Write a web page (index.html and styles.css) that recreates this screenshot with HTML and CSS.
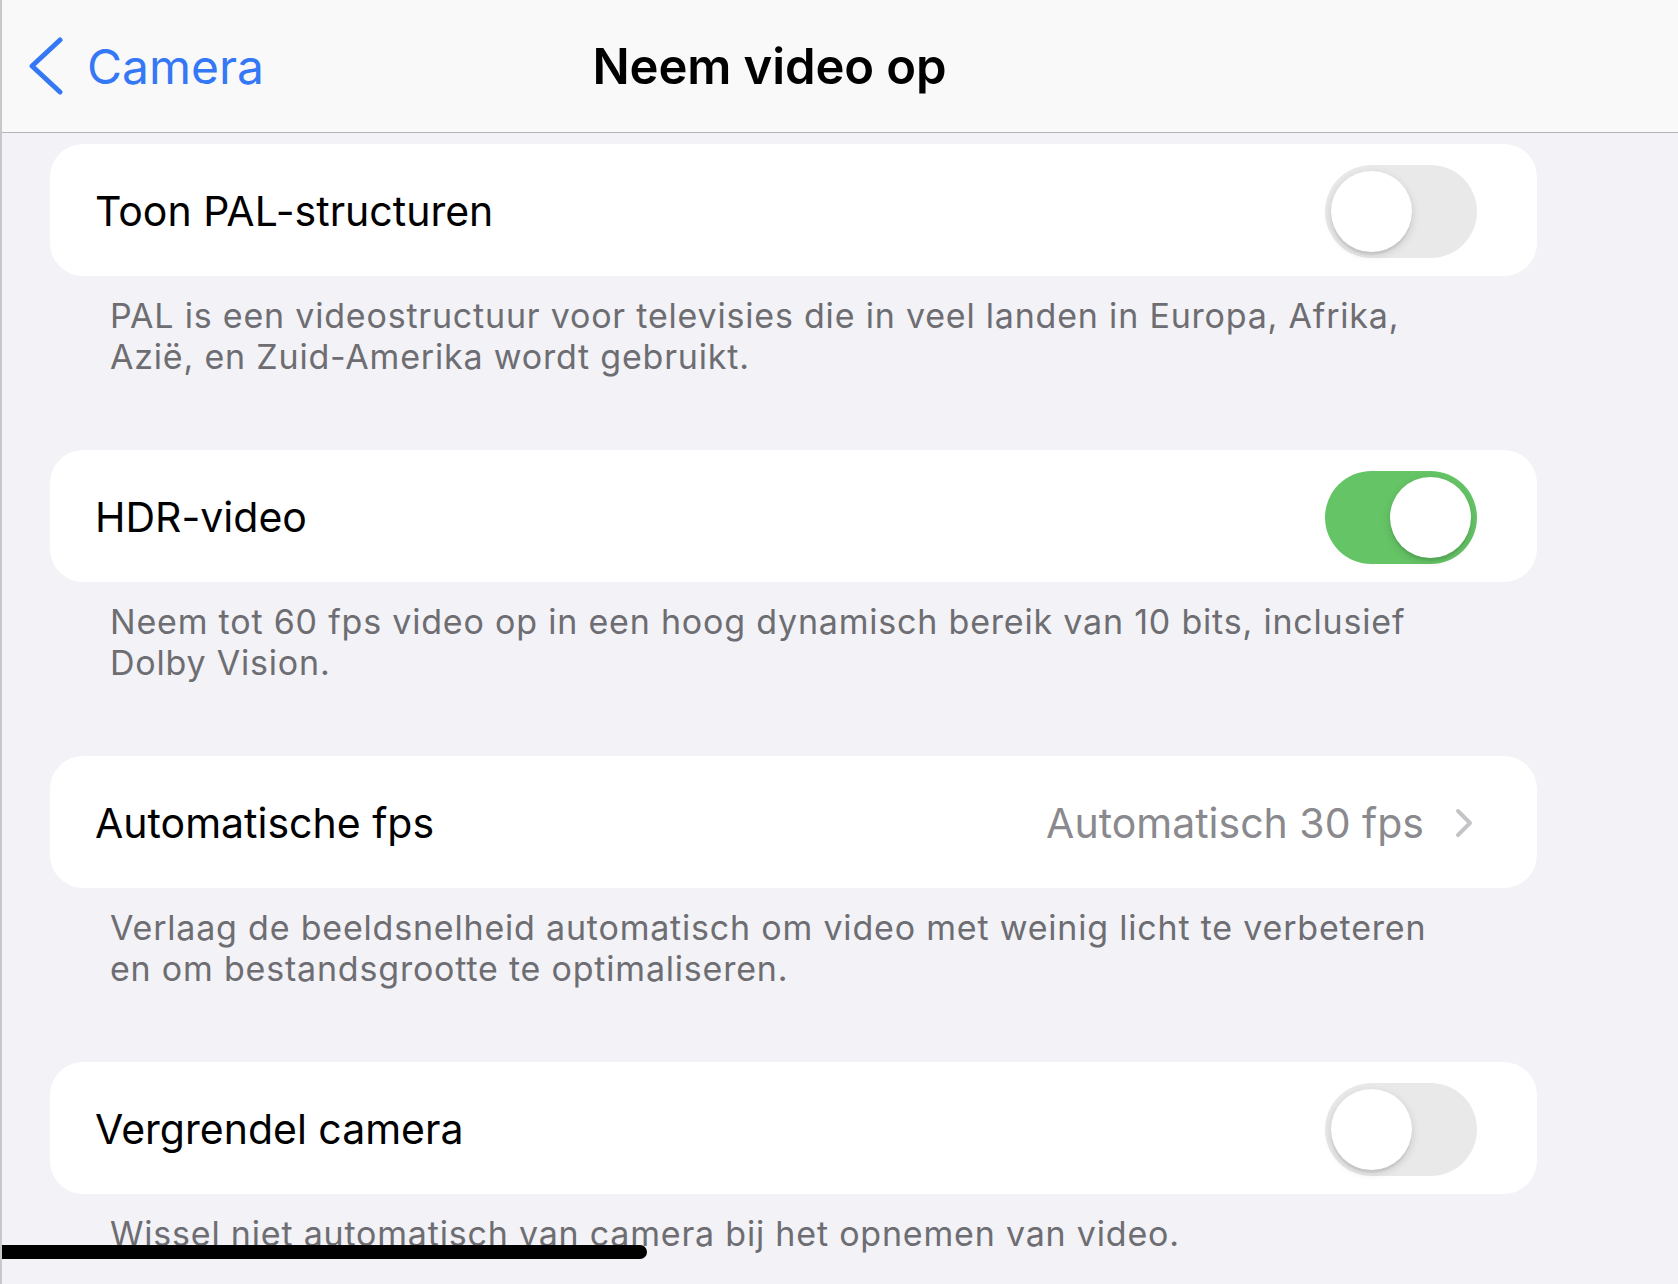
FILE: index.html
```html
<!DOCTYPE html>
<html lang="nl">
<head>
<meta charset="UTF-8">
<meta name="viewport" content="width=device-width,initial-scale=1">
<title>Neem video op</title>
<link rel="stylesheet" href="styles.css">
</head>
<body>
<header class="navbar">
  <div class="nav-inner">
    <a class="back" href="#">
      <svg width="34" height="58" viewBox="0 0 34 58"><path d="M31 3 L3 29 L31 55"/></svg>
      <span>Camera</span>
    </a>
    <h1 class="title">Neem video op</h1>
    <span></span>
  </div>
</header>

<main class="list">
  <section class="group">
    <div class="cell">
      <span class="label">Toon PAL-structuren</span>
      <span class="switch"></span>
    </div>
    <p class="note">PAL is een videostructuur voor televisies die in veel landen in Europa, Afrika,<br>Azië, en Zuid-Amerika wordt gebruikt.</p>
  </section>

  <section class="group">
    <div class="cell">
      <span class="label">HDR-video</span>
      <span class="switch on"></span>
    </div>
    <p class="note">Neem tot 60 fps video op in een hoog dynamisch bereik van 10 bits, inclusief<br>Dolby Vision.</p>
  </section>

  <section class="group">
    <div class="cell link">
      <span class="label">Automatische fps</span>
      <span class="value">Automatisch 30 fps</span>
      <svg class="chev" width="20" height="32" viewBox="0 0 20 32"><path d="M4 4 L16 16 L4 28"/></svg>
    </div>
    <p class="note">Verlaag de beeldsnelheid automatisch om video met weinig licht te verbeteren<br>en om bestandsgrootte te optimaliseren.</p>
  </section>

  <section class="group">
    <div class="cell">
      <span class="label">Vergrendel camera</span>
      <span class="switch"></span>
    </div>
    <p class="note">Wissel niet automatisch van camera bij het opnemen van video.</p>
  </section>
</main>

<div class="scroll-hint"></div>
<div class="home-bar"></div>
</body>
</html>
```

FILE: styles.css
```css
:root{--bg:#f2f2f7;--card:#fff;--txt:#000;--sub:#6d6d72;--val:#8a8a8e;
      --blue:#3478f6;--green:#65c466;--off:#e9e9ea;--sep:#b4b4b8}
*{box-sizing:border-box;margin:0;padding:0}
html{height:100%;overflow:hidden}
body{min-height:100%;background:var(--bg);color:var(--txt);font-family:Inter,"Liberation Sans",Arial,sans-serif;
     border-left:2px solid #c8c8cc;position:relative}

/* ------- nav bar ------- */
.navbar{height:133px;background:#f9f9f9;border-bottom:1px solid var(--sep)}
.nav-inner{width:1535px;height:132px;display:grid;grid-template-columns:1fr auto 1fr;align-items:center}
.back{display:flex;align-items:center;gap:24px;margin-left:27px;color:var(--blue);text-decoration:none;font-size:48px}
.back svg path{fill:none;stroke:var(--blue);stroke-width:5;stroke-linecap:round;stroke-linejoin:round}
.title{font-size:49px;font-weight:600;letter-spacing:-.1px}

/* ------- list ------- */
.list{padding:11px 0 0 48px;width:1535px}
.group{margin-bottom:73px}
.cell{height:132px;background:var(--card);border-radius:33px;display:flex;align-items:center;
      padding:2px 60px 0 45px}
.label{font-size:41px;flex:1}
.value{font-size:41px;color:var(--val);margin-right:30px}
.cell.link{padding-right:63px}
.chev path{fill:none;stroke:#c4c4c8;stroke-width:4;stroke-linecap:round;stroke-linejoin:round}
.note{padding:19px 0 0 60px;font-size:34px;line-height:41px;letter-spacing:.8px;color:var(--sub)}

/* ------- switch ------- */
.switch{width:152px;height:93px;border-radius:47px;background:var(--off);position:relative;flex:none}
.switch::after{content:"";position:absolute;top:6px;left:6px;width:81px;height:81px;border-radius:50%;
      background:#fff;box-shadow:0 3px 8px rgba(0,0,0,.15),0 3px 1px rgba(0,0,0,.06)}
.switch.on{background:var(--green)}
.switch.on::after{left:65px}

/* ------- overlays ------- */
.scroll-hint{position:absolute;left:-2px;top:173px;width:2px;height:133px;background:#8fb6f5}
.home-bar{position:absolute;left:-2px;top:1245px;width:647px;height:14px;background:#000;border-radius:0 7px 7px 0}
```
